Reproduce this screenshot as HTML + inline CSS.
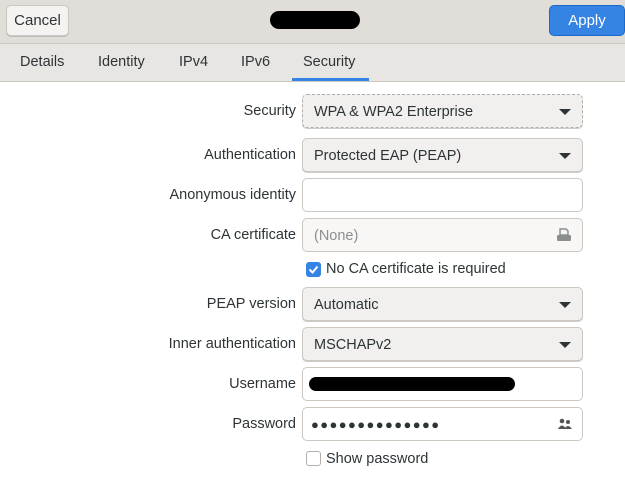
<!DOCTYPE html>
<html><head><meta charset="utf-8"><style>
*{box-sizing:border-box;margin:0;padding:0}
body{width:625px;height:479px;background:#fff;font-family:"Liberation Sans",sans-serif;font-size:14.5px;color:#2e3436;position:relative;overflow:hidden}
.hdr{position:absolute;left:0;top:0;width:625px;height:44px;background:#e1ded9;border-bottom:1px solid #cdc7c2}
.tabs{position:absolute;left:0;top:44px;width:625px;height:38px;background:#e8e6e3;border-bottom:1px solid #cdc7c2}
.btn{position:absolute;top:5px;height:31px;border-radius:5px;line-height:30px;text-align:center;font-size:15px}
.cancel{left:6px;width:63px;background:#f4f3f2;border:1px solid #cdc7c2;box-shadow:0 1px #bbb}
.apply{left:549px;width:76px;background:#3584e4;border:1px solid #1b6acb;color:#fff}
.tab{position:absolute;top:54px;font-size:14.5px;color:#2e3436}
.ul{position:absolute;left:292px;top:78px;width:77px;height:3px;background:#3584e4}
.lbl{position:absolute;right:329px;font-size:14.5px;text-align:right;white-space:nowrap}
.f{position:absolute;left:302px;width:281px;height:34px;border:1px solid #cdc7c2;border-radius:5px;background:#fff;padding-left:11px;line-height:34px;font-size:14.5px}
.dd{background:#f1f0ee;box-shadow:0 1px #ccc}
.dd:after{content:"";position:absolute;right:11px;top:14px;border-left:6px solid transparent;border-right:6px solid transparent;border-top:6px solid #2e3436}
.cb{position:absolute;left:306px;width:15px;height:15px;border-radius:3px}
</style></head><body>
<div class="hdr"></div>
<div class="btn cancel">Cancel</div>
<div style="position:absolute;left:270px;top:11px;width:90px;height:18px;background:#000;border-radius:9px"></div>
<div class="btn apply">Apply</div>
<div class="tabs"></div>
<div class="tab" style="left:20px">Details</div>
<div class="tab" style="left:98px">Identity</div>
<div class="tab" style="left:179px">IPv4</div>
<div class="tab" style="left:241px">IPv6</div>
<div class="tab" style="left:303px">Security</div>
<div class="ul"></div>
<div class="lbl" style="top:103px">Security</div>
<div class="f dd" style="top:94px;border-style:dashed;border-color:#b5aea8">WPA &amp; WPA2 Enterprise</div>
<div class="lbl" style="top:147px">Authentication</div>
<div class="f dd" style="top:138px">Protected EAP (PEAP)</div>
<div class="lbl" style="top:187px">Anonymous identity</div>
<div class="f" style="top:178px"></div>
<div class="lbl" style="top:227px">CA certificate</div>
<div class="f" style="top:218px;background:#f8f7f6;color:#8b8e8f">(None)<svg style="position:absolute;right:10px;top:9px" width="16" height="14"><path d="M4 1h6l2 2v4H4z" fill="none" stroke="#8b8e8f" stroke-width="1.5"/><rect x="1" y="7" width="14" height="6" rx="1" fill="#8b8e8f"/></svg></div>
<div class="cb" style="top:262px;background:#3584e4"><svg width="15" height="15"><path d="M3.5 7.5l3 3 5-6" stroke="#fff" stroke-width="2" fill="none"/></svg></div>
<div style="position:absolute;left:326px;top:261px">No CA certificate is required</div>
<div class="lbl" style="top:296px">PEAP version</div>
<div class="f dd" style="top:287px">Automatic</div>
<div class="lbl" style="top:336px">Inner authentication</div>
<div class="f dd" style="top:327px">MSCHAPv2</div>
<div class="lbl" style="top:376px">Username</div>
<div class="f" style="top:367px"><span style="position:absolute;left:6px;top:9px;width:206px;height:14px;background:#000;border-radius:7px"></span></div>
<div class="lbl" style="top:416px">Password</div>
<div class="f" style="top:407px;padding-left:8px;letter-spacing:1.4px;font-size:13px">●●●●●●●●●●●●●●<svg style="position:absolute;right:10px;top:10px" width="14" height="12"><circle cx="4" cy="3" r="2.3" fill="#555"/><circle cx="10" cy="4" r="2" fill="#555"/><path d="M0 11q4-7 8 0zM6 11q4-6 8 0z" fill="#555"/></svg></div>
<div class="cb" style="top:451px;border:1px solid #b5aea8;background:#fff"></div>
<div style="position:absolute;left:326px;top:451px">Show password</div>
</body></html>
